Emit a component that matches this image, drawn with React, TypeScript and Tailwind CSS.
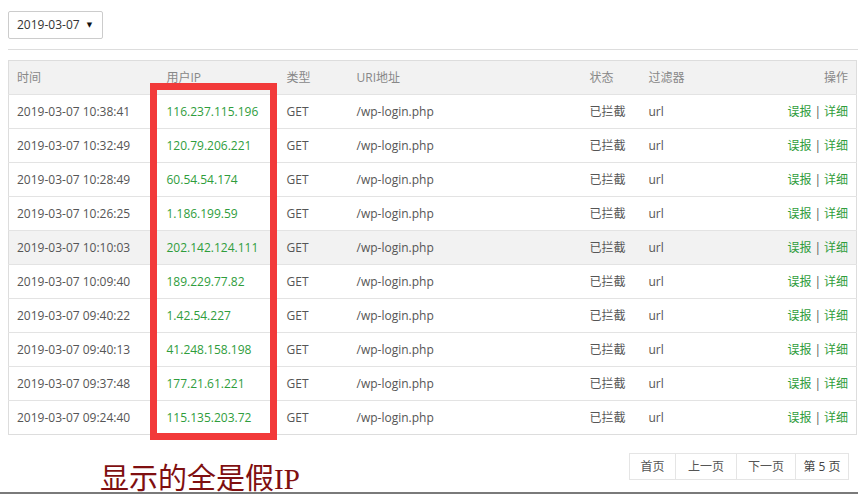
import React from "react";

const rows = [
  ["2019-03-07 10:38:41", "116.237.115.196"],
  ["2019-03-07 10:32:49", "120.79.206.221"],
  ["2019-03-07 10:28:49", "60.54.54.174"],
  ["2019-03-07 10:26:25", "1.186.199.59"],
  ["2019-03-07 10:10:03", "202.142.124.111"],
  ["2019-03-07 10:09:40", "189.229.77.82"],
  ["2019-03-07 09:40:22", "1.42.54.227"],
  ["2019-03-07 09:40:13", "41.248.158.198"],
  ["2019-03-07 09:37:48", "177.21.61.221"],
  ["2019-03-07 09:24:40", "115.135.203.72"],
];

export default function App() {
  return (
    <div
      className="relative h-[494px] w-[858px] overflow-hidden bg-white text-[12px] text-[#555]"
      style={{ fontFamily: '"Open Sans", "Noto Sans CJK SC", sans-serif' }}
    >
      <div className="pl-[8px] pt-[11px]">
        <div className="flex h-[28px] w-[95px] items-center rounded-[2px] border border-[#ccc] pl-[8px] text-[12px] text-[#333]">
          <span>2019-03-07</span>
          <span
            className="ml-[7px] text-[7px] text-[#111]"
            style={{ fontFamily: '"DejaVu Sans", sans-serif' }}
          >
            ▼
          </span>
        </div>
        <div className="mt-[10px] h-px bg-[#ddd]" />
        <table className="mt-[10px] w-[849px] table-fixed border-collapse border border-[#ddd]">
          <colgroup>
            <col className="w-[150px]" />
            <col className="w-[120px]" />
            <col className="w-[70px]" />
            <col className="w-[233px]" />
            <col className="w-[59px]" />
            <col className="w-[100px]" />
            <col />
          </colgroup>
          <thead>
            <tr className="h-[34px] bg-[#f2f2f2] text-[#888]">
              <th className="pl-[8px] text-left font-normal">时间</th>
              <th className="pl-[8px] text-left font-normal">用户IP</th>
              <th className="pl-[8px] text-left font-normal">类型</th>
              <th className="pl-[8px] text-left font-normal">URI地址</th>
              <th className="pl-[8px] text-left font-normal">状态</th>
              <th className="pl-[8px] text-left font-normal">过滤器</th>
              <th className="pr-[8px] text-right font-normal">操作</th>
            </tr>
          </thead>
          <tbody>
            {rows.map(([t, ip], i) => (
              <tr
                key={i}
                className={`h-[34px] border-t border-[#e3e3e3] ${i === 4 ? "bg-[#f2f2f2]" : "bg-white"}`}
              >
                <td className="pl-[8px]">{t}</td>
                <td className="pl-[8px] text-[#2f9d3c]">{ip}</td>
                <td className="pl-[8px]">GET</td>
                <td className="pl-[8px]">/wp-login.php</td>
                <td className="pl-[8px]">已拦截</td>
                <td className="pl-[8px]">url</td>
                <td className="pr-[8px] text-right">
                  <span className="text-[#2f9d3c]">误报</span>
                  <span className="mx-[3px] text-[#555]">|</span>
                  <span className="text-[#2f9d3c]">详细</span>
                </td>
              </tr>
            ))}
          </tbody>
        </table>
        <div className="mt-[18px] flex justify-end pr-[9px]">
          <div className="flex h-[27px] border border-[#e5e5e5] text-[#555]">
            <span className="flex w-[46px] items-center justify-center border-r border-[#e5e5e5]">首页</span>
            <span className="flex w-[61px] items-center justify-center border-r border-[#e5e5e5]">上一页</span>
            <span className="flex w-[59px] items-center justify-center border-r border-[#e5e5e5]">下一页</span>
            <span className="flex w-[52px] items-center justify-center text-[#444]">第 5 页</span>
          </div>
        </div>
      </div>

      <div className="absolute left-[150px] top-[83px] h-[357px] w-[127px] border-[7px] border-[#f23a3a]" />

      <div
        className="absolute left-[100px] top-[465px] text-[29px] leading-none text-[#7f0f10]"
        style={{ fontFamily: '"Liberation Serif", "Noto Sans CJK SC", serif' }}
      >
        显示的全是假IP
      </div>

      <div className="absolute bottom-0 left-0 h-[2px] w-full bg-[#7a7a7a]" />
    </div>
  );
}
